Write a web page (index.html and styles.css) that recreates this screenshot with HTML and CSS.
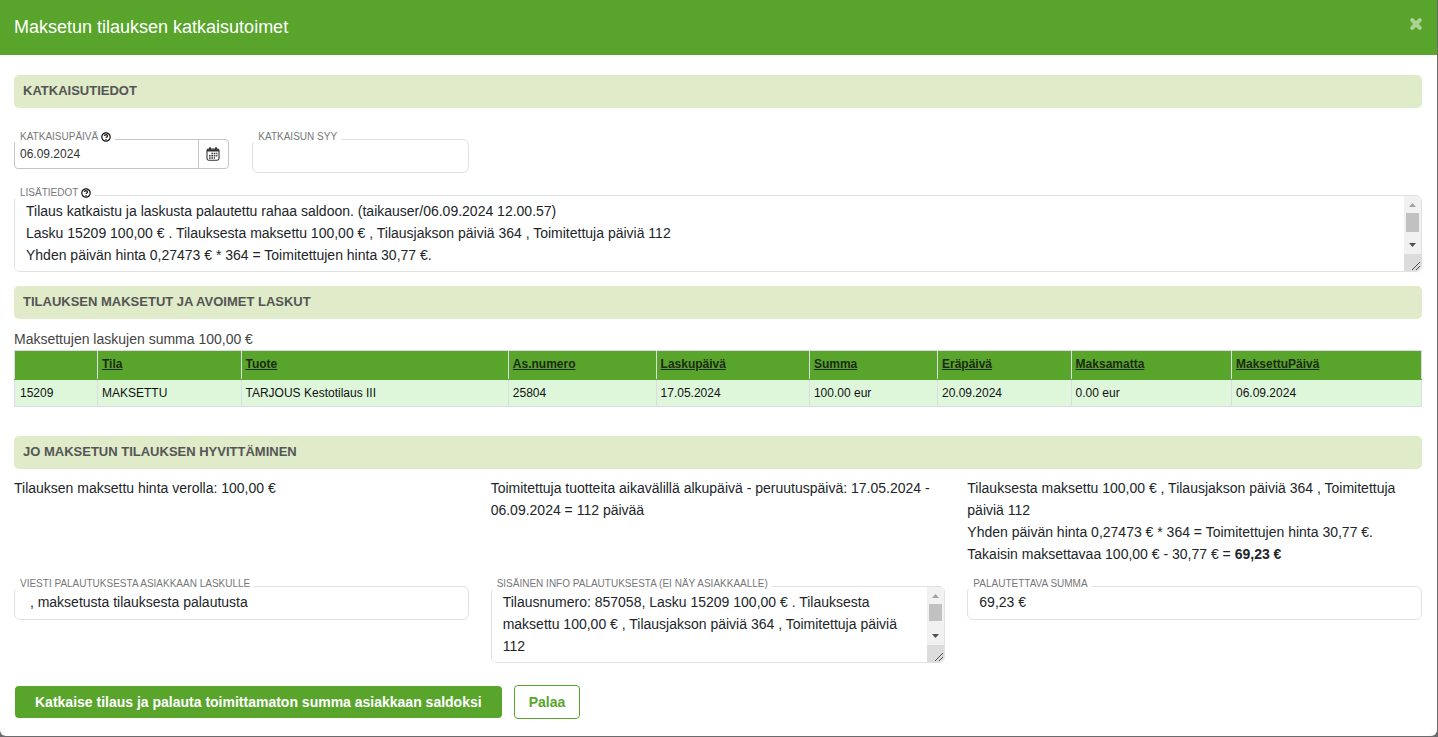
FILE: index.html
```html
<!DOCTYPE html>
<html lang="fi">
<head>
<meta charset="utf-8">
<title>Maksetun tilauksen katkaisutoimet</title>
<link rel="stylesheet" href="styles.css">
</head>
<body>
<main class="modal">
  <header class="modal-header">
    <h1 class="modal-title">Maksetun tilauksen katkaisutoimet</h1>
    <button class="close" type="button" aria-label="Sulje">
      <svg width="12" height="12" viewBox="0 0 12 12"><path d="M2.2 2.2 9.8 9.8M9.8 2.2 2.2 9.8" stroke="currentColor" stroke-width="4" stroke-linecap="round"/></svg>
    </button>
  </header>
  <form class="modal-body">
    <h2 class="section-title">Katkaisutiedot</h2>
    <div class="row row-first">
      <div class="row-half">
        <div class="field">
          <label class="field-label" for="date">Katkaisupäivä
            <svg class="help" viewBox="0 0 10 10"><circle cx="5" cy="5" r="4.2"/><path d="M3.5 4.1c0-2 3-2 3 0 0 1-1.5 1-1.5 2M5 7v1"/></svg>
          </label>
          <div class="date-group">
            <input class="date-input" id="date" type="text" value="06.09.2024">
            <button class="date-button" type="button" aria-label="Kalenteri">
              <svg width="14" height="14" viewBox="0 0 14 14" fill="none" stroke="#333"><rect x="1" y="2" width="12" height="11.2" rx="1.6" stroke-width="1.1"/><path d="M1 3.4h12" stroke-width="2.2"/><path d="M4 .3v3M10 .3v3" stroke-width="1.8"/><path d="M5.4 6.6h6M3 8.8h8.4M3 11h6" stroke-width="1.5" stroke-dasharray="1.6 .8"/></svg>
            </button>
          </div>
        </div>
        <div class="field">
          <label class="field-label" for="reason">Katkaisun syy</label>
          <input class="control" id="reason" type="text">
        </div>
      </div>
    </div>
    <div class="field field-notes">
      <label class="field-label" for="notes">Lisätiedot
        <svg class="help" viewBox="0 0 10 10"><circle cx="5" cy="5" r="4.2"/><path d="M3.5 4.1c0-2 3-2 3 0 0 1-1.5 1-1.5 2M5 7v1"/></svg>
      </label>
      <textarea class="control area" id="notes" rows="3">Tilaus katkaistu ja laskusta palautettu rahaa saldoon. (taikauser/06.09.2024 12.00.57)
Lasku 15209 100,00 € . Tilauksesta maksettu 100,00 € , Tilausjakson päiviä 364 , Toimitettuja päiviä 112
Yhden päivän hinta 0,27473 € * 364 = Toimitettujen hinta 30,77 €.
Takaisin maksettavaa 100,00 € - 30,77 € = 69,23 €
</textarea>
      <svg class="scroller" width="17" height="75" viewBox="0 0 17 75" aria-hidden="true"><path fill="#f1f1f1" d="M0 0h17v58H0z"/><path fill="#dcdcdc" d="M0 58h17v17H0z"/><path fill="#a3a3a3" d="M5 11 8.5 7 12 11z"/><path fill="#c1c1c1" d="M2 17h13v19H2z"/><path fill="#505050" d="M5 47h7l-3.500 4z"/><path stroke="#505050" d="m8 74 8-8M12 74l4-4"/></svg>
    </div>

    <h2 class="section-title">Tilauksen maksetut ja avoimet laskut</h2>
    <p class="sum">Maksettujen laskujen summa 100,00 €</p>
    <table class="invoices">
      <colgroup><col class="c-id"><col class="c-state"><col class="c-product"><col class="c-customer"><col class="c-date"><col class="c-total"><col class="c-due"><col class="c-open"><col class="c-paid"></colgroup>
      <thead>
        <tr><th></th><th><a href="#">Tila</a></th><th><a href="#">Tuote</a></th><th><a href="#">As.numero</a></th><th><a href="#">Laskupäivä</a></th><th><a href="#">Summa</a></th><th><a href="#">Eräpäivä</a></th><th><a href="#">Maksamatta</a></th><th><a href="#">MaksettuPäivä</a></th></tr>
      </thead>
      <tbody>
        <tr><td>15209</td><td>MAKSETTU</td><td>TARJOUS Kestotilaus III</td><td>25804</td><td>17.05.2024</td><td>100.00 eur</td><td>20.09.2024</td><td>0.00 eur</td><td>06.09.2024</td></tr>
      </tbody>
    </table>

    <h2 class="section-title">Jo maksetun tilauksen hyvittäminen</h2>
    <div class="row row-text">
      <p>Tilauksen maksettu hinta verolla: 100,00 €</p>
      <p>Toimitettuja tuotteita aikavälillä alkupäivä - peruutuspäivä: 17.05.2024 - 06.09.2024 = 112 päivää</p>
      <p>Tilauksesta maksettu 100,00 € , Tilausjakson päiviä 364 , Toimitettuja päiviä 112<br>Yhden päivän hinta 0,27473 € * 364 = Toimitettujen hinta 30,77 €.<br>Takaisin maksettavaa 100,00 € - 30,77 € = <b>69,23 €</b></p>
    </div>
    <div class="row">
      <div class="field">
        <label class="field-label" for="message">Viesti palautuksesta asiakkaan laskulle</label>
        <input class="control" id="message" type="text" value=" , maksetusta tilauksesta palautusta">
      </div>
      <div class="field">
        <label class="field-label" for="info">Sisäinen info palautuksesta (ei näy asiakkaalle)</label>
        <textarea class="control area" id="info" rows="3">Tilausnumero: 857058, Lasku 15209 100,00 € . Tilauksesta maksettu 100,00 € , Tilausjakson päiviä 364 , Toimitettuja päiviä 112
Yhden päivän hinta 0,27473 € * 364 = Toimitettujen hinta 30,77 €.</textarea>
        <svg class="scroller" width="17" height="75" viewBox="0 0 17 75" aria-hidden="true"><path fill="#f1f1f1" d="M0 0h17v58H0z"/><path fill="#dcdcdc" d="M0 58h17v17H0z"/><path fill="#a3a3a3" d="M5 11 8.500 7 12 11z"/><path fill="#c1c1c1" d="M2 17h13v17H2z"/><path fill="#505050" d="M5 47h7l-3.500 4z"/><path stroke="#505050" d="m8 74 8-8M12 74l4-4"/></svg>
      </div>
      <div class="field">
        <label class="field-label" for="amount">Palautettava summa</label>
        <input class="control" id="amount" type="text" value="69,23 €">
      </div>
    </div>
    <div class="actions">
      <button class="btn btn-primary" type="submit">Katkaise tilaus ja palauta toimittamaton summa asiakkaan saldoksi</button>
      <button class="btn btn-outline" type="button">Palaa</button>
    </div>
  </form>
</main>
</body>
</html>
```
FILE: styles.css
```css
* { box-sizing: border-box; }
body {
  margin: 0;
  padding: 0 1px 1px 0;
  background: #6b6b6d;
  color: #212529;
  font: 14px/22px "Liberation Sans", Arial, sans-serif;
}
p, h1, h2 { margin: 0; }
input, textarea, button { font: inherit; color: inherit; margin: 0; }
.modal { background: #fff; border-radius: 0 0 6px 6px; overflow: hidden; }
.modal-header {
  display: flex;
  justify-content: space-between;
  align-items: center;
  height: 55px;
  padding: 0 15px 2px 14px;
  background: #59a52c;
}
.modal-title { color: #fff; font-size: 18px; font-weight: 400; }
.close {
  display: flex;
  padding: 0;
  border: 0;
  background: none;
  color: #acd295;
  margin-bottom: 5px;
}
.modal-body { padding: 20px 15px 17px 14px; }
.section-title {
  padding: 5px 9px 6px;
  border-radius: 5px;
  background: #dfebc9;
  color: #555;
  font-size: 13px;
  font-weight: 700;
  text-transform: uppercase;
}
.row { display: grid; grid-template-columns: repeat(3, 1fr); gap: 22px; align-items: start; }
.row-half { display: grid; grid-template-columns: 1fr 1fr; gap: 22px; align-items: start; }
.row-first { margin-top: 31px; }
.field { position: relative; }
.field-label {
  position: absolute;
  top: -8px;
  left: 0;
  display: flex;
  align-items: center;
  gap: 3px;
  padding: 0 4px 0 6px;
  background: #fff;
  color: #777;
  font-size: 10px;
  line-height: 11px;
  text-transform: uppercase;
  white-space: nowrap;
}
.help { width: 10px; height: 10px; fill: none; stroke: #111; stroke-width: 1.2; }
.control {
  display: block;
  width: 100%;
  height: 34px;
  padding: 0 11px 2px;
  border: 1px solid #dee2e6;
  border-radius: 6px;
  background: #fff;
}
.area {
  height: 77px;
  padding: 4px 28px 4px 11px;
  resize: none;
}
.scroller { position: absolute; top: 1px; right: 1px; border-radius: 0 5px 5px 0; }
.date-group { display: flex; height: 30px; border: 1px solid #c5c5c5; border-radius: 4px; margin-right: 1px; }
.date-input { flex: 1; min-width: 0; padding: 0 5px 1px; border: 0; background: none; font-size: 12px; color: #333; }
.date-button {
  display: flex;
  align-items: center;
  justify-content: center;
  width: 30px;
  padding: 0 2px 0 0;
  border: 0;
  border-left: 1px solid #c5c5c5;
  background: none;
}
.field-notes { margin: 22px 0 14px; }
.sum { margin-top: 9px; color: #444; }
.invoices {
  width: 100%;
  margin-bottom: 29px;
  border-collapse: collapse;
  table-layout: fixed;
  color: #111;
  font-size: 12px;
  line-height: 16px;
}
.invoices th, .invoices td { padding: 5px 4px; border: 1px solid #dcdce6; text-align: left; }
.invoices td:first-child { padding-left: 5px; }
.invoices th { padding: 5px 4px 7px; border-bottom-color: #59a52c; background: #59a52c; }
.invoices td { background: #def7db; }
.invoices a { color: #1c2b14; }
.c-id { width: 5.9%; }
.c-state { width: 10.2%; }
.c-product { width: 19%; }
.c-customer { width: 10.5%; }
.c-date { width: 10.9%; }
.c-total { width: 9.1%; }
.c-due { width: 9.5%; }
.c-open { width: 11.4%; }
.c-paid { width: 13.5%; }
.row-text { margin: 8px 0 21px; }
.actions { display: flex; align-items: center; gap: 12px; margin-top: 22px; padding-left: 1px; }
.btn { padding: 5px 20px; border: 0; border-radius: 4px; font-weight: 700; }
.btn-primary { background: #59a52c; color: #fff; }
.btn-outline { padding: 5px 14px; border: 1px solid #59a52c; background: #fff; color: #59a52c; }
```
